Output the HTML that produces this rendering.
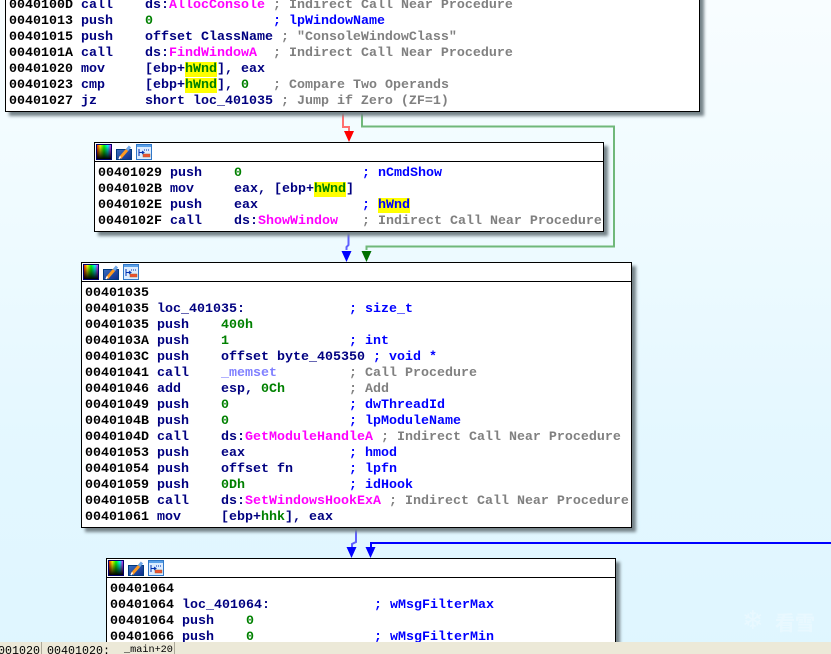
<!DOCTYPE html>
<html>
<head>
<meta charset="utf-8">
<style>
html,body{margin:0;padding:0;width:831px;height:654px;overflow:hidden;}
#root{position:absolute;left:0;top:0;width:831px;height:654px;overflow:hidden;background:linear-gradient(180deg,#f8fdff 0%,#f0fbff 30%,#e3f7ff 70%,#dff6ff 100%);font-family:"Liberation Mono",monospace;}
.box{position:absolute;background:#fff;border:1px solid #000;box-sizing:border-box;box-shadow:4px 4px 3px #76848a;}
.hline{position:absolute;left:0;right:0;height:1px;background:#000;}
pre{position:absolute;margin:0;font:bold 13.33px/16px "Liberation Mono",monospace;color:#000080;white-space:pre;}
i{font-style:normal;}
.a{color:#000;}
.g{color:#008000;}
.b{color:#0000ff;}
.c{color:#808080;}
.m{color:#ff00ff;}
.p{color:#8080ff;}
.y{background:#ffff00;}
svg.ic{position:absolute;}
#status{position:absolute;left:0;top:642px;width:831px;height:12px;background:#ece9d8;overflow:hidden;font:11.67px/16px "Liberation Mono",monospace;color:#000;}
#status span{position:absolute;top:1px;white-space:pre;}
#status u{position:absolute;top:0;width:1px;height:12px;background:#aca899;}
#wm1{position:absolute;left:742px;top:606px;font:26px/30px "DejaVu Sans",sans-serif;color:#fff;opacity:.3;}
#wm2{position:absolute;left:775px;top:609px;font:bold 20px/26px "Noto Sans CJK SC",sans-serif;color:#fff;opacity:.3;}
</style>
</head>
<body>
<div id="root">
<svg style="position:absolute;left:0;top:0" width="831" height="654">
  <g fill="none" stroke-width="2">
    <path d="M343 110V127H349V135" stroke="#ff7070"/>
    <path d="M362 110V126.500H614V246.500H366.500V250" stroke="#70b87a"/>
    <path d="M348.500 232V245L346.500 247V250" stroke="#6060ff"/>
    <path d="M356 527V542L352 544V547" stroke="#6060ff"/>
    <path d="M371 548V543H831" stroke="#0000ff"/>
  </g>
  <path d="M344 131H354L349 142Z" fill="#ff0000"/>
  <path d="M341.500 251H351.500L346.500 262Z" fill="#0000ff"/>
  <path d="M361.500 251H371.500L366.500 262Z" fill="#007000"/>
  <path d="M346.500 547H356.500L351.500 558Z" fill="#0000ff"/>
  <path d="M365.500 547H375.500L370.500 558Z" fill="#0000ff"/>
</svg>

<div class="box" style="left:5px;top:-20px;width:695px;height:132px;"></div>
<pre style="left:9px;top:-2px;"><i class="a">0040100D</i> call    ds:<i class="m">AllocConsole</i> <i class="c">; Indirect Call Near Procedure</i>
<i class="a">00401013</i> push    <i class="g">0</i>               <i class="b">; lpWindowName</i>
<i class="a">00401015</i> push    offset ClassName <i class="c">; "ConsoleWindowClass"</i>
<i class="a">0040101A</i> call    ds:<i class="m">FindWindowA</i>  <i class="c">; Indirect Call Near Procedure</i>
<i class="a">00401020</i> mov     [ebp+<i class="g y">hWnd</i>], eax
<i class="a">00401023</i> cmp     [ebp+<i class="g y">hWnd</i>], <i class="g">0</i>   <i class="c">; Compare Two Operands</i>
<i class="a">00401027</i> jz      short loc_401035 <i class="c">; Jump if Zero (ZF=1)</i></pre>

<div class="box" style="left:94px;top:142px;width:510px;height:90px;"><div class="hline" style="top:18px"></div></div>
<pre style="left:98px;top:166px;"><i class="a">00401029</i> push    <i class="g">0</i>               <i class="b">; nCmdShow</i>
<i class="a">0040102B</i> mov     eax, [ebp+<i class="g y">hWnd</i>]
<i class="a">0040102E</i> push    eax             <i class="b">; <i class="y">hWnd</i></i>
<i class="a">0040102F</i> call    ds:<i class="m">ShowWindow</i>   <i class="c">; Indirect Call Near Procedure</i></pre>

<div class="box" style="left:81px;top:262px;width:551px;height:266px;"><div class="hline" style="top:18px"></div></div>
<pre style="left:85px;top:286px;"><i class="a">00401035</i>
<i class="a">00401035</i> loc_401035:             <i class="b">; size_t</i>
<i class="a">00401035</i> push    <i class="g">400h</i>
<i class="a">0040103A</i> push    <i class="g">1</i>               <i class="b">; int</i>
<i class="a">0040103C</i> push    offset byte_405350 <i class="b">; void *</i>
<i class="a">00401041</i> call    <i class="p">_memset</i>         <i class="c">; Call Procedure</i>
<i class="a">00401046</i> add     esp, <i class="g">0Ch</i>        <i class="c">; Add</i>
<i class="a">00401049</i> push    <i class="g">0</i>               <i class="b">; dwThreadId</i>
<i class="a">0040104B</i> push    <i class="g">0</i>               <i class="b">; lpModuleName</i>
<i class="a">0040104D</i> call    ds:<i class="m">GetModuleHandleA</i> <i class="c">; Indirect Call Near Procedure</i>
<i class="a">00401053</i> push    eax             <i class="b">; hmod</i>
<i class="a">00401054</i> push    offset fn       <i class="b">; lpfn</i>
<i class="a">00401059</i> push    <i class="g">0Dh</i>             <i class="b">; idHook</i>
<i class="a">0040105B</i> call    ds:<i class="m">SetWindowsHookExA</i> <i class="c">; Indirect Call Near Procedure</i>
<i class="a">00401061</i> mov     [ebp+<i class="g">hhk</i>], eax</pre>

<div class="box" style="left:106px;top:558px;width:510px;height:110px;"><div class="hline" style="top:18px"></div></div>
<pre style="left:110px;top:582px;"><i class="a">00401064</i>
<i class="a">00401064</i> loc_401064:             <i class="b">; wMsgFilterMax</i>
<i class="a">00401064</i> push    <i class="g">0</i>
<i class="a">00401066</i> push    <i class="g">0</i>               <i class="b">; wMsgFilterMin</i></pre>

<svg width="0" height="0" style="position:absolute">
  <defs>
    <linearGradient id="rb" x1="0" x2="1" y1="0" y2="0">
      <stop offset="0" stop-color="#ff0000"/><stop offset=".25" stop-color="#ffff00"/><stop offset=".5" stop-color="#00ff00"/><stop offset=".75" stop-color="#00ffff"/><stop offset="1" stop-color="#ff00ff"/>
    </linearGradient>
    <linearGradient id="dk" x1="0" x2="0" y1="0" y2="1">
      <stop offset="0" stop-color="#000" stop-opacity="0"/><stop offset="1" stop-color="#000"/>
    </linearGradient>
    <linearGradient id="bl" x1="0" x2="1" y1="0" y2="1">
      <stop offset="0" stop-color="#3a6fc0"/><stop offset="1" stop-color="#0c2a88"/>
    </linearGradient>
    <g id="icons">
      <rect x=".5" y=".5" width="15" height="15" fill="url(#rb)" stroke="#00006a"/>
      <rect x="1" y="1" width="14" height="14" fill="url(#dk)"/>
      <rect x="20.500" y="5.500" width="15" height="10" fill="url(#bl)" stroke="#003a80"/>
      <path d="M24 14L31 6" stroke="#ff9a20" stroke-width="3"/>
      <path d="M31 6L34 2.500" stroke="#70a8e8" stroke-width="3"/>
      <path d="M23 15L24.500 12.500" stroke="#fff" stroke-width="1.500"/>
      <rect x="40.500" y=".5" width="15" height="15" fill="#dcecff" stroke="#3078c8"/>
      <rect x="41" y="1" width="14" height="2" fill="#5aa0e8"/>
      <path d="M43 5V12M43 8.500H47M46 7L48 8.500L46 10" stroke="#0030b0" fill="none"/>
      <path d="M48 6H54" stroke="#0030b0" stroke-dasharray="1 1"/>
      <rect x="47" y="10" width="7" height="3" fill="#f05030" stroke="#a06030" stroke-width=".5"/>
    </g>
  </defs>
</svg>
<svg class="ic" style="left:96px;top:144px" width="60" height="16"><use href="#icons"/></svg>
<svg class="ic" style="left:83px;top:264px" width="60" height="16"><use href="#icons"/></svg>
<svg class="ic" style="left:108px;top:560px" width="60" height="16"><use href="#icons"/></svg>

<div id="wm1">❄</div>
<div id="wm2">看雪</div>

<div id="status">
  <span style="left:-2px">001020</span><u style="left:41px"></u>
  <span style="left:47px">00401020:</span>
  <span style="left:124px;font-size:10.200px">_main+20</span><u style="left:174px"></u>
</div>
</div>
</body>
</html>
